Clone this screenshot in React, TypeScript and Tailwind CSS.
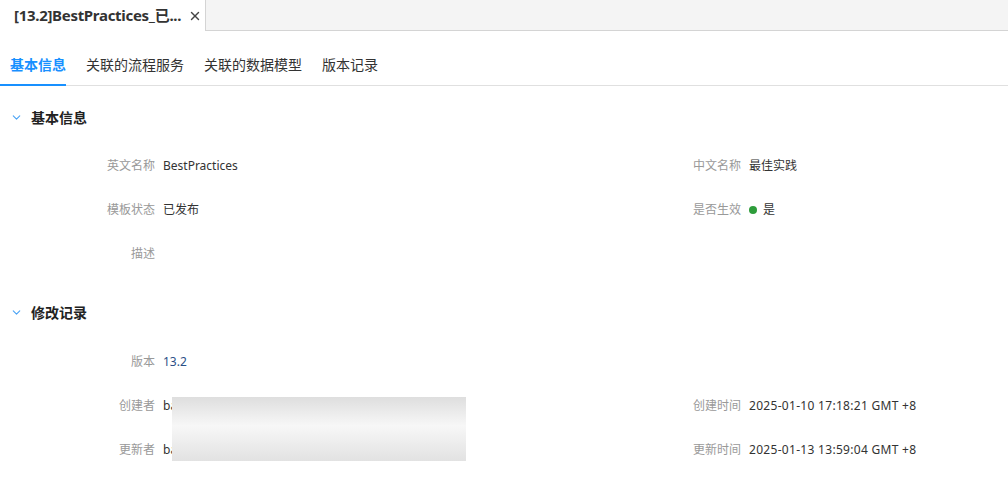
import { ChevronDown, X } from "lucide-react";

const font = { fontFamily: '"Microsoft YaHei", "Noto Sans", "Noto Sans CJK SC", sans-serif' };

function Field({ label, children }: { label: string; children?: React.ReactNode }) {
  return (
    <div className="flex items-center h-[44px]">
      <div className="w-[155px] text-right text-[12px] text-[#999] shrink-0">{label}</div>
      <div className="pl-2 text-[12px] text-[#333] flex items-center">{children}</div>
    </div>
  );
}

function Section({ title, pad, children }: { title: string; pad: string; children: React.ReactNode }) {
  return (
    <div>
      <div className="flex items-center h-[40px] pl-[10px] gap-[8px]">
        <ChevronDown size={13} strokeWidth={2} className="text-[#4aa3f5]" />
        <span className="text-[14px] font-bold text-[#222]">{title}</span>
      </div>
      <div className={pad}>{children}</div>
    </div>
  );
}

export default function App() {
  return (
    <div className="w-[1008px] h-[487px] bg-white overflow-hidden relative" style={font}>
      {/* top tabs */}
      <div className="flex h-[31px]">
        <div className="w-[205px] flex items-center pl-[14px] bg-white">
          <span className="text-[15px] font-bold text-[#333] whitespace-nowrap tracking-[-0.3px]">[13.2]BestPractices_已...</span>
          <X size={14} strokeWidth={2.4} className="ml-[7px] shrink-0 text-[#444]" />
        </div>
        <div className="flex-1 bg-[#f4f4f4] border-l border-b border-[#d4d4d4]" />
      </div>

      {/* sub tabs */}
      <div className="flex items-end h-[55px] border-b border-[#e0e0e0] px-[10px] gap-[20px] text-[14px] text-[#333]">
        <div className="relative pb-[10px] text-[#1890ff] font-bold">
          基本信息
          <div className="absolute left-[-10px] right-0 bottom-[-1px] h-[2px] bg-[#1890ff]" />
        </div>
        <div className="pb-[10px]">关联的流程服务</div>
        <div className="pb-[10px]">关联的数据模型</div>
        <div className="pb-[10px]">版本记录</div>
      </div>

      <div className="pt-[11px]">
        <Section title="基本信息" pad="pt-[7px]">
          <div className="grid grid-cols-[586px_1fr]">
            <Field label="英文名称">BestPractices</Field>
            <Field label="中文名称">最佳实践</Field>
            <Field label="模板状态">已发布</Field>
            <Field label="是否生效">
              <span className="w-[8px] h-[8px] rounded-full bg-[#2e9d3b] mr-[6px]" />
              是
            </Field>
            <Field label="描述" />
            <div />
          </div>
        </Section>
        <div className="h-[16px]" />
        <Section title="修改记录" pad="pt-[8px]">
          <div className="grid grid-cols-[586px_1fr]">
            <Field label="版本"><span className="text-[#2b4f86]">13.2</span></Field>
            <div />
            <Field label="创建者">ba</Field>
            <Field label="创建时间"><span className="tracking-[0.3px]">2025-01-10 17:18:21 GMT +8</span></Field>
            <Field label="更新者">ba</Field>
            <Field label="更新时间"><span className="tracking-[0.3px]">2025-01-13 13:59:04 GMT +8</span></Field>
          </div>
        </Section>
      </div>

      {/* blurred mask */}
      <div className="absolute left-[172px] top-[397px] w-[294px] h-[64px] bg-[linear-gradient(180deg,#dedede_0%,#f7f7f7_45%,#e2e2e2_100%)]" />
    </div>
  );
}
